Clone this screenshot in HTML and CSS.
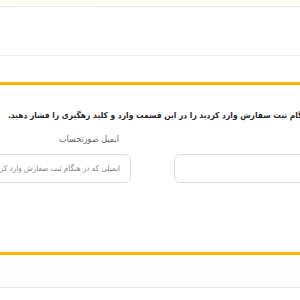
FILE: index.html
```html
<!DOCTYPE html>
<html lang="fa">
  <head>
    <meta charset="UTF-8" />
    <meta name="viewport" content="width=device-width, initial-scale=1.0" />
    <title>پیگیری سفارش</title>
    <link rel="stylesheet" href="styles.css">
  </head>
  <body>
    <div class="page">
      <div class="topbar"></div>
      <div class="header"></div>
      <div class="spacer"></div>
      <div class="track">
        <p class="hint">ایمیلی که در هنگام ثبت سفارش وارد کردید را در این قسمت وارد و کلید رهگیری را فشار دهید.</p>
        <div class="fields">
          <div class="field">
            <label class="label">&nbsp;</label>
            <input class="input" type="text" />
          </div>
          <div class="field">
            <label class="label">ایمیل صورتحساب</label>
            <input class="input" type="text" placeholder="ایمیلی که در هنگام ثبت سفارش وارد کردید" />
          </div>
        </div>
      </div>
      <div class="footer"></div>
    </div>
  </body>
</html>
```

FILE: styles.css
```css
html,
body {
  margin: 0;
  padding: 0;
  overflow: hidden;
  background: #fff;
}

body {
  font-family: "DejaVu Sans Condensed", "DejaVu Sans", sans-serif;
  color: #333;
}

/* wider than the window, it is cut on both sides */
.page {
  width: 445px;
  margin-left: -70px;
  direction: rtl;
}

.topbar {
  height: 6px;
  background: linear-gradient(to left, #fbfff0, #fefef3);
  border-bottom: 1px solid #ebebeb;
}

.header {
  height: 48px;
  border-bottom: 1px solid #eeeeee;
}

.spacer {
  height: 26px;
}

.track {
  border-top: 3px solid #fbb800;
  border-bottom: 3px solid #fbb800;
  height: 173px;
  box-sizing: border-box;
  padding: 25px 15px 0 15px;
}

.hint {
  margin: 0 0 14px 0;
  font-size: 8.4px;
  font-weight: bold;
  white-space: nowrap;
  color: #2a2a2a;
}

.fields {
  display: flex;
  gap: 43px;
}

.field {
  display: flex;
  flex-direction: column;
  flex: 1;
}

.label {
  font-size: 9px;
  color: #666;
  margin: 0 0 10px 0;
  padding-right: 12px;
}

.input {
  height: 29px;
  box-sizing: border-box;
  border: 1px solid #dcdcdc;
  border-radius: 6px;
  padding: 0 10px;
  font-family: "DejaVu Sans Condensed", "DejaVu Sans", sans-serif;
  font-size: 8px;
  direction: rtl;
  outline: none;
}

.input::placeholder {
  color: #888;
}

.footer {
  height: 32px;
  background: #fdfdfd;
  border-bottom: 1px solid #e8e8e8;
}
```
